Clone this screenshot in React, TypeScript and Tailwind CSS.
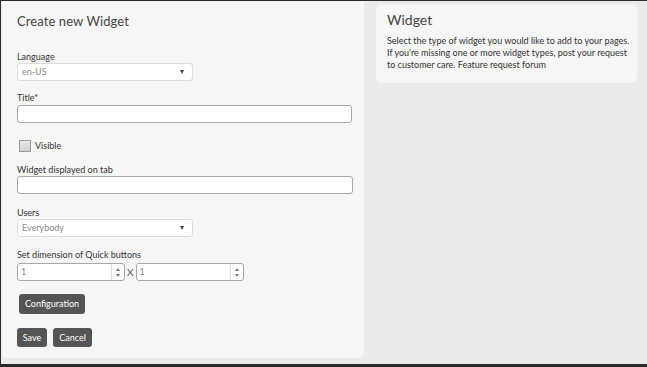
export default function App() {
  return (
    <div className="w-[647px] h-[367px] overflow-hidden bg-[#ebebeb] border-t border-l border-b-[3px] border-[#2a2a2a] flex items-start font-['Lato',sans-serif] text-[#333]">
      <div className="ml-px w-[362px] h-[357px] bg-[#f6f6f6] rounded-b-[5px] pl-[15px] flex flex-col">
        <h1 className="mt-[10px] h-[20px] leading-[20px] text-[13px] text-[#444] tracking-[0.1px]">Create new Widget</h1>

        <label className="mt-[20px] h-[11px] leading-[11px] text-[9px]">Language</label>
        <Select value="en-US" />

        <label className="mt-[11px] h-[11px] leading-[11px] text-[9px]">Title*</label>
        <input className="mt-[2px] w-[335px] h-[18px] bg-white border border-[#a8a8a8] rounded-[3px]" />

        <div className="mt-[16px] h-[13px] flex items-center gap-[4px]">
          <span className="ml-[2px] w-[12px] h-[12px] border border-[#9a9a9a] bg-gradient-to-b from-[#e8e8e8] to-[#cfcfcf]" />
          <span className="text-[9px] leading-[11px]">Visible</span>
        </div>

        <label className="mt-[12px] h-[11px] leading-[11px] text-[9px]">Widget displayed on tab</label>
        <input className="mt-[1px] w-[336px] h-[18px] bg-white border border-[#a8a8a8] rounded-[3px]" />

        <label className="mt-[13px] h-[11px] leading-[11px] text-[9px]">Users</label>
        <Select value="Everybody" />

        <label className="mt-[12px] h-[11px] leading-[11px] text-[9px]">Set dimension of Quick buttons</label>
        <div className="mt-[3px] flex items-center">
          <Spinner />
          <span className="mx-[2px] text-[10px] leading-[18px] text-[#555]">X</span>
          <Spinner />
        </div>

        <button className="mt-[13px] ml-[2px] w-[66px] h-[20px] rounded-[3px] bg-[#555] text-white text-[9px] leading-[20px]">Configuration</button>

        <div className="mt-[14px] flex gap-[6px]">
          <button className="w-[30px] h-[19px] rounded-[3px] bg-[#555] text-white text-[9px] leading-[19px]">Save</button>
          <button className="w-[39px] h-[19px] rounded-[3px] bg-[#555] text-white text-[9px] leading-[19px]">Cancel</button>
        </div>
      </div>

      <div className="ml-[12px] mt-[3px] w-[261px] h-[79px] bg-[#f6f6f6] rounded-[6px] pl-[11px] pt-[7px]">
        <h2 className="h-[18px] leading-[18px] text-[14px] text-[#444]">Widget</h2>
        <p className="mt-[6px] text-[9px] leading-[12px] text-[#333]">
          Select the type of widget you would like to add to your pages.
          <br />
          If you're missing one or more widget types, post your request
          <br />
          to customer care. Feature request forum
        </p>
      </div>
    </div>
  );
}

function Select({ value }: { value: string }) {
  return (
    <div className="mt-[1px] w-[176px] h-[18px] bg-white border border-[#dcdcdc] rounded-[3px] flex items-center justify-between pl-[4px] pr-[8px]">
      <span className="text-[9px] text-[#8a8a8a]">{value}</span>
      <span className="w-0 h-0 border-l-[2.5px] border-r-[2.5px] border-t-[4px] border-l-transparent border-r-transparent border-t-[#444]" />
    </div>
  );
}

function Spinner() {
  return (
    <div className="w-[108px] h-[18px] bg-white border border-[#a8a8a8] rounded-[3px] flex items-center">
      <span className="flex-1 pl-[3px] text-[9px] text-[#8a8a8a]">1</span>
      <div className="w-[13px] h-full border-l border-[#dcdcdc] flex flex-col items-center justify-center gap-[3px]">
        <span className="w-0 h-0 border-l-[2px] border-r-[2px] border-b-[3px] border-l-transparent border-r-transparent border-b-[#777]" />
        <span className="w-0 h-0 border-l-[2px] border-r-[2px] border-t-[3px] border-l-transparent border-r-transparent border-t-[#777]" />
      </div>
    </div>
  );
}
